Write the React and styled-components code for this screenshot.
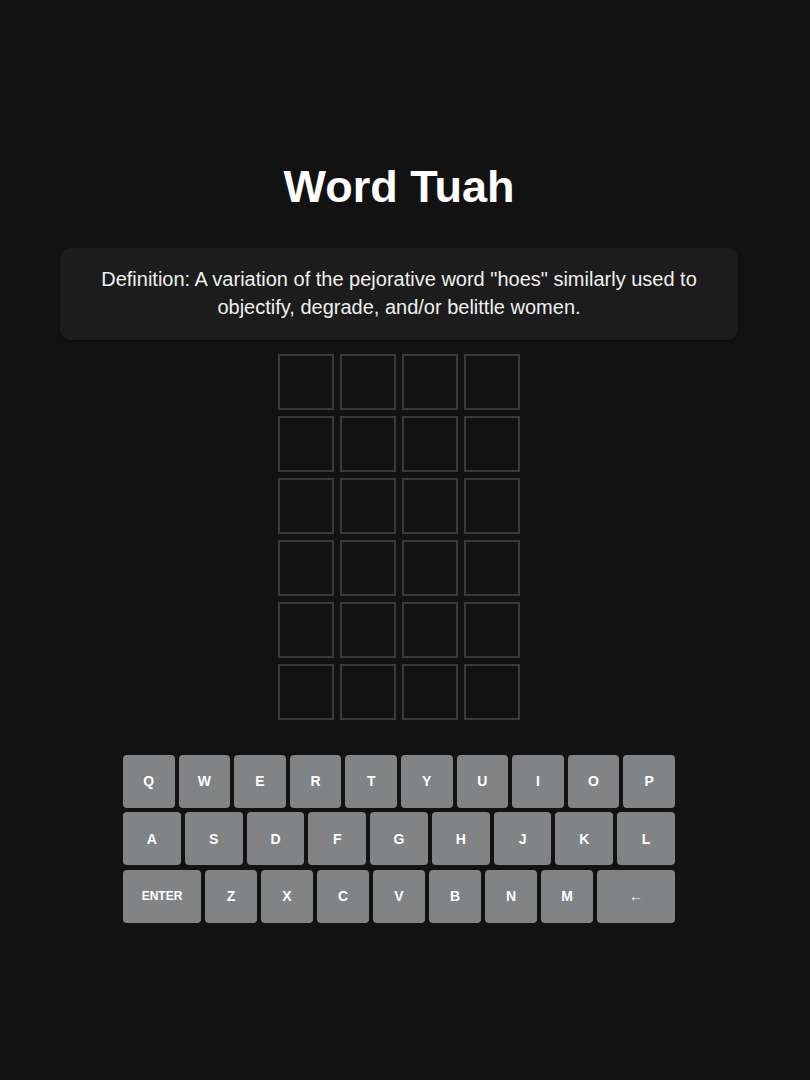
import React from 'react';
import styled, { createGlobalStyle } from 'styled-components';

const GlobalStyle = createGlobalStyle`
  html, body {
    margin: 0;
    padding: 0;
    background-color: #121212;
  }
  body {
    font-family: "Liberation Sans", Arial, sans-serif;
    color: #ffffff;
  }
`;

const Page = styled.div`
  width: 798px;
  min-height: 1080px;
  padding-top: 161px;
  box-sizing: border-box;
  display: flex;
  flex-direction: column;
  align-items: center;
`;

const Title = styled.h1`
  margin: 0 0 35px;
  font-size: 45px;
  line-height: 1.15;
  font-weight: bold;
`;

const Definition = styled.div`
  width: 678px;
  box-sizing: border-box;
  padding: 17px 24px 19px;
  margin-bottom: 14px;
  background-color: #1c1c1c;
  border-radius: 10px;
  box-shadow: 0 1px 3px rgba(0, 0, 0, 0.4);
  text-align: center;
  font-size: 20px;
  line-height: 28px;
  color: #f0f0f0;
`;

const Board = styled.div`
  display: grid;
  grid-template-columns: repeat(4, 56px);
  grid-auto-rows: 56px;
  gap: 6px;
`;

const Tile = styled.div`
  box-sizing: border-box;
  border: 2px solid #3a3a3c;
  background-color: #121212;
`;

const Keyboard = styled.div`
  width: 552px;
  margin-top: 35px;
  display: flex;
  flex-direction: column;
  gap: 4.5px;
`;

const KeyRow = styled.div`
  display: flex;
  gap: 4px;
`;

const Key = styled.button`
  flex: ${(p) => (p.$wide ? 1.5 : 1)};
  height: 53px;
  border: none;
  border-radius: 4px;
  background-color: #818384;
  color: #ffffff;
  font-family: "Liberation Sans", Arial, sans-serif;
  font-weight: bold;
  font-size: ${(p) => (p.$small ? '12px' : '14px')};
  padding: 0;
  cursor: pointer;
`;

const rows = [
  ['Q', 'W', 'E', 'R', 'T', 'Y', 'U', 'I', 'O', 'P'],
  ['A', 'S', 'D', 'F', 'G', 'H', 'J', 'K', 'L'],
  ['ENTER', 'Z', 'X', 'C', 'V', 'B', 'N', 'M', '←'],
];

const App = () => {
  const tiles = Array.from({ length: 24 });

  return (
    <>
      <GlobalStyle />
      <Page>
        <Title>Word Tuah</Title>
        <Definition>
          Definition: A variation of the pejorative word "hoes" similarly used to objectify, degrade, and/or belittle women.
        </Definition>
        <Board>
          {tiles.map((_, i) => (
            <Tile key={i} />
          ))}
        </Board>
        <Keyboard>
          {rows.map((row, r) => (
            <KeyRow key={r}>
              {row.map((k) => (
                <Key key={k} $wide={k === 'ENTER' || k === '←'} $small={k === 'ENTER'}>
                  {k}
                </Key>
              ))}
            </KeyRow>
          ))}
        </Keyboard>
      </Page>
    </>
  );
};

export default App;
